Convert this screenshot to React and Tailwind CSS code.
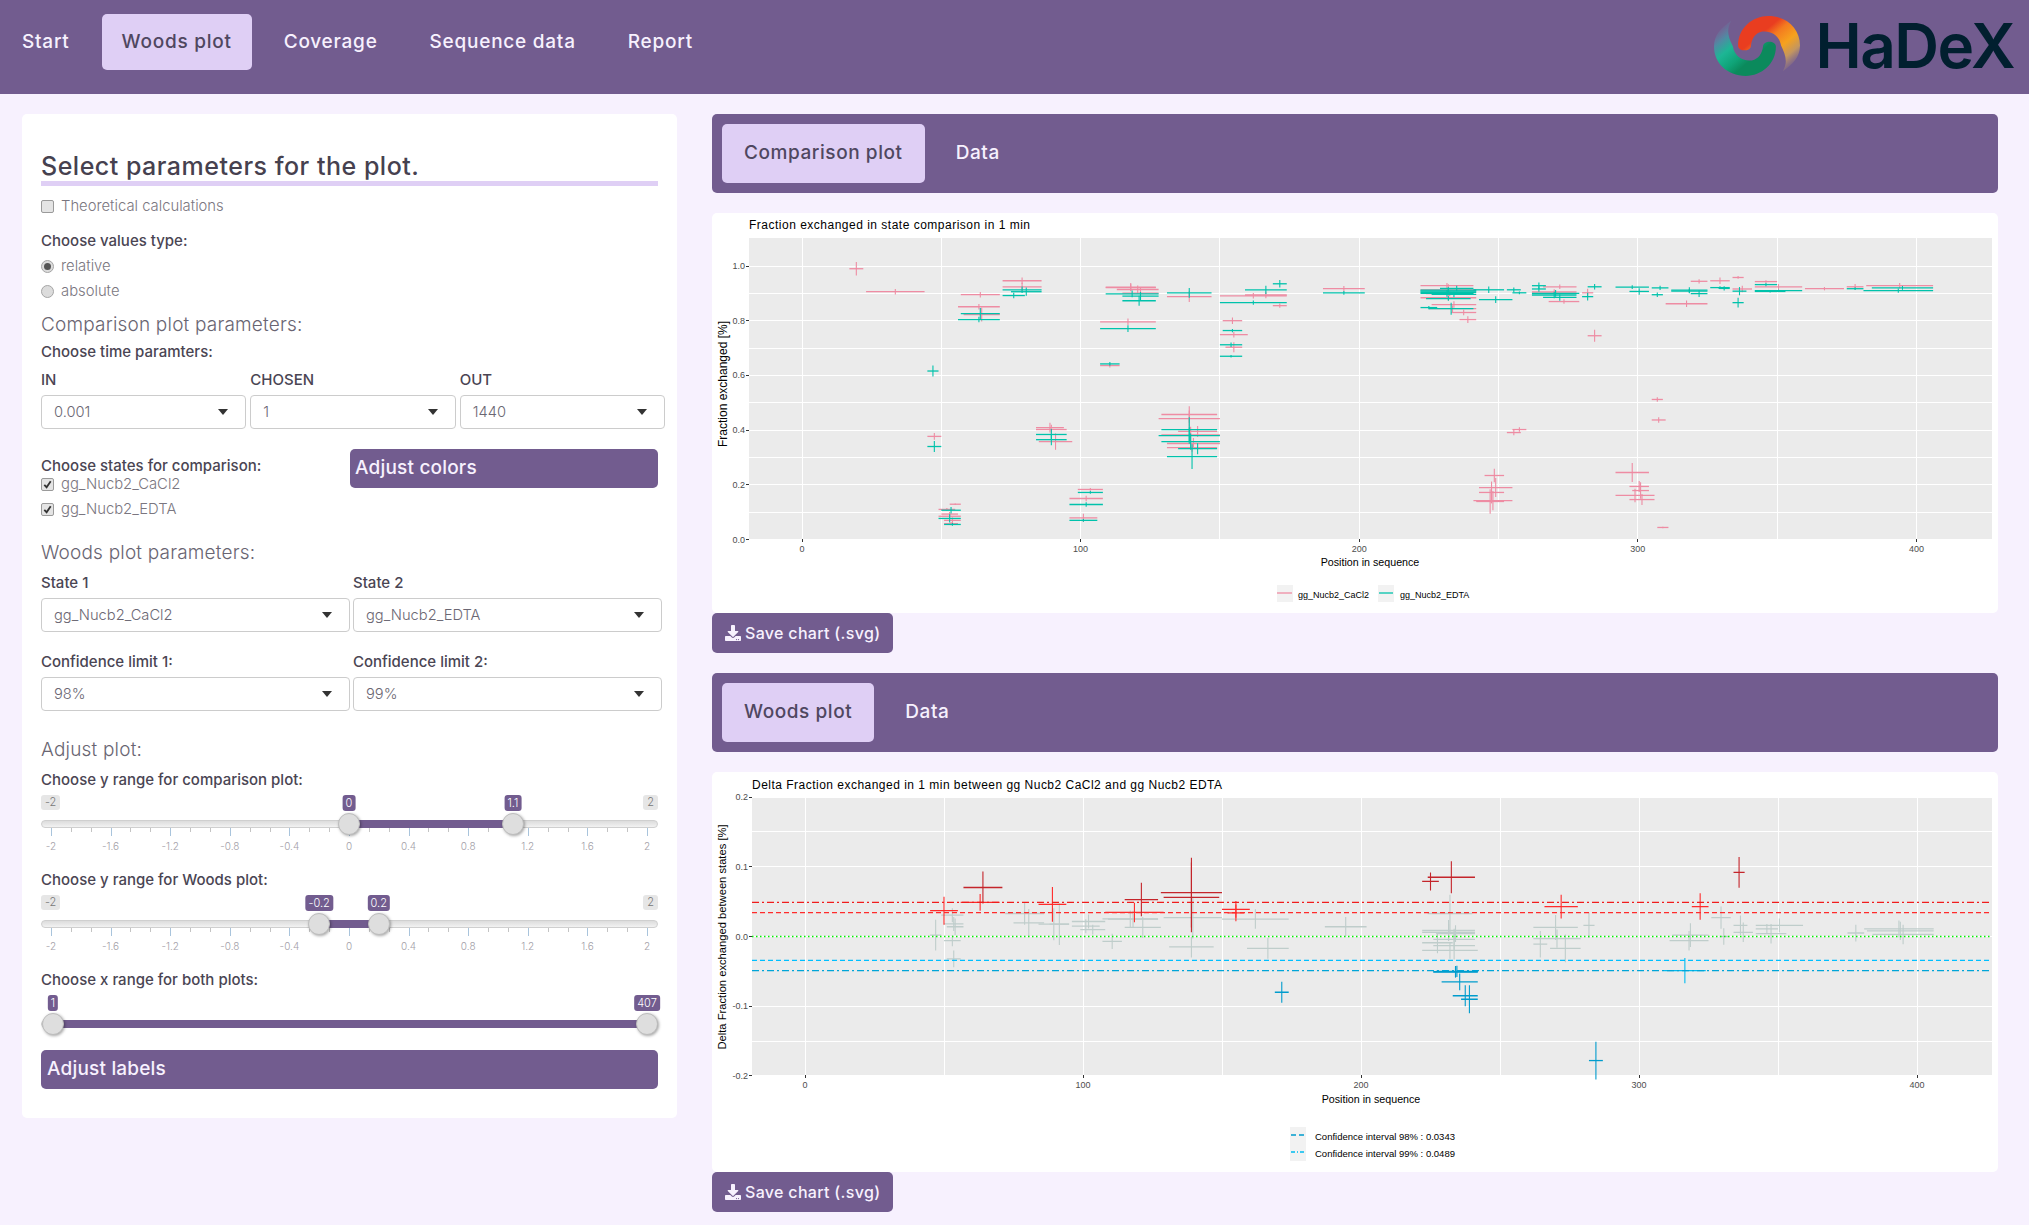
import { FaDownload } from "react-icons/fa";

const PINK = "#ee8ca3";
const TEAL = "#00c2ab";
const DARK = "#c4252b";
const RED = "#ff2b2b";
const BLUE = "#009ccd";
const CYAN = "#00bcf0";
const GRAY = "#bfcdcb";

// [start, end, value, error]
const statePink = [
  [17, 22, 0.99, 0.025], [23, 44, 0.906, 0.01], [57, 71, 0.895, 0.01], [56, 71, 0.851, 0.01], [58, 71, 0.822, 0.025],
  [72, 86, 0.946, 0.012], [72, 86, 0.924, 0.015], [109, 127, 0.923, 0.015], [109, 127, 0.921, 0.012], [113, 128, 0.914, 0.015],
  [115, 128, 0.901, 0.02], [131, 147, 0.888, 0.02], [150, 174, 0.891, 0.01], [159, 174, 0.894, 0.012], [169, 174, 0.855, 0.008],
  [107, 127, 0.796, 0.012], [151, 158, 0.8, 0.012], [150, 160, 0.749, 0.01], [152, 158, 0.703, 0.018], [107, 114, 0.636, 0.007],
  [187, 202, 0.917, 0.01], [45, 50, 0.377, 0.012], [84, 94, 0.409, 0.018], [84, 95, 0.402, 0.018], [85, 97, 0.358, 0.03],
  [129, 149, 0.457, 0.03], [128, 150, 0.442, 0.03], [135, 149, 0.395, 0.02], [129, 150, 0.382, 0.03], [131, 150, 0.351, 0.02],
  [131, 149, 0.336, 0.015], [99, 108, 0.183, 0.005], [96, 108, 0.15, 0.01], [96, 106, 0.079, 0.015], [53, 57, 0.129, 0.003],
  [49, 55, 0.11, 0.005], [50, 56, 0.093, 0.008], [49, 57, 0.085, 0.01], [51, 57, 0.07, 0.01], [51, 56, 0.058, 0.006],
  [222, 241, 0.928, 0.01], [222, 242, 0.913, 0.02], [224, 241, 0.899, 0.01], [222, 242, 0.884, 0.01], [226, 242, 0.859, 0.012],
  [225, 242, 0.844, 0.012], [233, 242, 0.83, 0.01], [236, 242, 0.804, 0.012], [266, 278, 0.924, 0.008], [262, 278, 0.905, 0.01],
  [268, 279, 0.87, 0.008], [280, 284, 0.902, 0.015], [282, 287, 0.745, 0.022], [319, 325, 0.944, 0.008], [326, 333, 0.946, 0.012],
  [334, 338, 0.958, 0.005], [334, 341, 0.916, 0.012], [310, 325, 0.862, 0.012], [342, 350, 0.943, 0.005], [342, 359, 0.924, 0.01],
  [360, 374, 0.917, 0.006], [375, 381, 0.924, 0.01], [382, 406, 0.928, 0.01], [253, 258, 0.391, 0.01], [255, 260, 0.402, 0.008],
  [245, 252, 0.234, 0.025], [243, 255, 0.19, 0.035], [243, 252, 0.172, 0.04], [241, 255, 0.142, 0.035], [242, 252, 0.139, 0.045],
  [292, 304, 0.245, 0.035], [297, 304, 0.194, 0.02], [298, 304, 0.179, 0.03], [292, 306, 0.161, 0.025], [297, 306, 0.146, 0.02],
  [305, 309, 0.512, 0.008], [305, 310, 0.437, 0.01], [307, 311, 0.044, 0.003],
];

const stateTeal = [
  [45, 49, 0.616, 0.02], [45, 50, 0.34, 0.02], [57, 71, 0.826, 0.02], [56, 71, 0.804, 0.01], [72, 80, 0.892, 0.01],
  [75, 86, 0.906, 0.015], [72, 86, 0.913, 0.012], [109, 128, 0.898, 0.012], [115, 128, 0.89, 0.015], [115, 127, 0.873, 0.018],
  [131, 147, 0.902, 0.018], [107, 127, 0.771, 0.012], [159, 174, 0.913, 0.015], [150, 174, 0.866, 0.008], [169, 174, 0.935, 0.014],
  [151, 158, 0.764, 0.006], [150, 158, 0.712, 0.008], [150, 158, 0.67, 0.005], [107, 114, 0.642, 0.007], [187, 202, 0.902, 0.007],
  [84, 95, 0.384, 0.02], [84, 95, 0.365, 0.02], [129, 149, 0.402, 0.045], [128, 150, 0.38, 0.03], [129, 150, 0.358, 0.03],
  [135, 149, 0.332, 0.02], [131, 149, 0.303, 0.045], [99, 108, 0.172, 0.005], [96, 108, 0.128, 0.008], [96, 106, 0.07, 0.005],
  [50, 57, 0.107, 0.012], [49, 57, 0.077, 0.015], [51, 57, 0.055, 0.005],
  [222, 242, 0.912, 0.01], [222, 242, 0.908, 0.012], [222, 242, 0.904, 0.01], [222, 241, 0.9, 0.012], [226, 242, 0.896, 0.01],
  [229, 241, 0.918, 0.01], [224, 240, 0.881, 0.008], [222, 228, 0.848, 0.006], [225, 241, 0.844, 0.022], [241, 252, 0.913, 0.012],
  [243, 255, 0.877, 0.012], [253, 258, 0.913, 0.008], [255, 260, 0.902, 0.005], [262, 267, 0.928, 0.012], [262, 267, 0.916, 0.01],
  [262, 279, 0.9, 0.012], [262, 278, 0.894, 0.012], [266, 278, 0.885, 0.012], [282, 287, 0.924, 0.01], [280, 284, 0.888, 0.014],
  [292, 304, 0.923, 0.007], [297, 304, 0.907, 0.012], [305, 311, 0.92, 0.008], [305, 309, 0.895, 0.008], [312, 325, 0.912, 0.01],
  [312, 325, 0.908, 0.008], [319, 325, 0.899, 0.012], [326, 333, 0.921, 0.005], [329, 333, 0.918, 0.008], [334, 339, 0.908, 0.015],
  [334, 338, 0.866, 0.018], [342, 350, 0.932, 0.006], [342, 353, 0.907, 0.004], [342, 359, 0.91, 0.004], [375, 381, 0.917, 0.005],
  [384, 406, 0.92, 0.007], [381, 406, 0.91, 0.008],
];

const woodsGray = [
  [49, 57, 0.0306, 0.01], [50, 57, 0.018, 0.01], [51, 57, 0.014, 0.012], [45, 49, 0.002, 0.022], [50, 56, -0.006, 0.008],
  [51, 56, -0.032, 0.012], [72, 86, 0.033, 0.016], [75, 86, 0.0196, 0.02], [84, 95, 0.0177, 0.023], [88, 95, 0.0177, 0.03],
  [96, 108, 0.0215, 0.01], [96, 106, 0.0148, 0.01], [99, 108, 0.01, 0.007], [107, 114, -0.007, 0.011], [107, 127, 0.0254, 0.012],
  [109, 127, 0.025, 0.012], [115, 128, 0.013, 0.015], [129, 150, 0.0272, 0.03], [131, 147, -0.015, 0.015], [150, 174, 0.025, 0.014],
  [159, 174, -0.017, 0.015], [187, 202, 0.014, 0.014], [224, 240, 0.033, 0.027], [222, 241, 0.0086, 0.015], [222, 241, 0.0058, 0.012],
  [227, 241, 0.004, 0.012], [222, 233, -0.009, 0.015], [226, 241, -0.004, 0.015], [226, 241, -0.013, 0.02], [222, 242, -0.02, 0.012],
  [262, 278, 0.013, 0.018], [262, 279, -0.003, 0.013], [262, 267, -0.011, 0.019], [268, 279, -0.017, 0.02], [280, 284, 0.016, 0.018],
  [312, 325, 0.002, 0.017], [311, 325, -0.006, 0.014], [326, 333, 0.027, 0.016], [329, 332, 0, 0.012], [334, 339, 0.016, 0.014],
  [334, 341, 0.006, 0.014], [342, 350, 0.011, 0.007], [342, 353, 0.004, 0.014], [342, 359, 0.016, 0.01], [375, 381, 0.005, 0.012],
  [381, 406, 0.011, 0.012], [382, 406, 0.008, 0.013], [384, 406, 0.003, 0.014],
];

const woodsRed = [
  [45, 55, 0.037, 0.02], [56, 70, 0.049, 0.012], [84, 94, 0.046, 0.025], [108, 129, 0.0345, 0.014], [150, 160, 0.039, 0.012],
  [152, 158, 0.034, 0.012], [266, 278, 0.043, 0.017], [319, 325, 0.043, 0.019],
];
const woodsDark = [
  [57, 71, 0.0703, 0.023], [115, 127, 0.053, 0.024], [128, 150, 0.063, 0.05], [129, 149, 0.056, 0.05],
  [222, 228, 0.079, 0.013], [224, 241, 0.085, 0.023], [334, 338, 0.092, 0.022],
];
const woodsBlue = [
  [169, 174, -0.08, 0.015], [226, 242, -0.051, 0.008], [226, 242, -0.0505, 0.008], [227, 242, -0.05, 0.008], [229, 242, -0.065, 0.012],
  [233, 242, -0.085, 0.015], [236, 242, -0.09, 0.02], [282, 287, -0.178, 0.027],
];

function Crosses({ data, color, sx, sy }) {
  return (
    <g stroke={color}>
      {data.map(([a, b, v, e], i) => (
        <g key={i}>
          <line x1={sx(a)} x2={sx(b)} y1={sy(v)} y2={sy(v)} strokeWidth="1.3" />
          <line x1={sx((a + b) / 2)} x2={sx((a + b) / 2)} y1={sy(v + e)} y2={sy(v - e)} strokeWidth="1.1" />
        </g>
      ))}
    </g>
  );
}

function Panel({ box, sx, sy, yTicks, yMinor, digits }) {
  const xTicks = [0, 100, 200, 300, 400];
  return (
    <g>
      <rect x={box.left} y={box.top} width={box.right - box.left} height={box.bottom - box.top} fill="#ebebeb" />
      <g stroke="#fff" shapeRendering="crispEdges">
        {yMinor.map((v) => <line key={v} x1={box.left} x2={box.right} y1={sy(v)} y2={sy(v)} />)}
        {yTicks.map((v) => <line key={v} x1={box.left} x2={box.right} y1={sy(v)} y2={sy(v)} />)}
        {[50, 150, 250, 350].map((v) => <line key={v} x1={sx(v)} x2={sx(v)} y1={box.top} y2={box.bottom} />)}
        {xTicks.map((v) => <line key={v} x1={sx(v)} x2={sx(v)} y1={box.top} y2={box.bottom} />)}
      </g>
      <g stroke="#333" shapeRendering="crispEdges">
        {yTicks.map((v) => <line key={v} x1={box.left - 3} x2={box.left} y1={sy(v)} y2={sy(v)} />)}
        {xTicks.map((v) => <line key={v} x1={sx(v)} x2={sx(v)} y1={box.bottom} y2={box.bottom + 3} />)}
      </g>
      <g fill="#4d4d4d" fontSize="9">
        {yTicks.map((v) => (
          <text key={v} x={box.left - 4} y={sy(v) + 3} textAnchor="end">{v === 0 ? "0.0" : v.toFixed(digits)}</text>
        ))}
        {xTicks.map((v) => (
          <text key={v} x={sx(v)} y={box.bottom + 13} textAnchor="middle">{v}</text>
        ))}
      </g>
    </g>
  );
}

function ComparisonChart() {
  const box = { left: 749, right: 1992, top: 238, bottom: 539 };
  const sx = (v) => 802 + v * 2.786;
  const sy = (v) => 539.5 - v * 273.5;
  return (
    <svg viewBox="712 213 1286 400" className="block w-full h-[400px] rounded-[5px] bg-white" fontFamily="'Liberation Sans', sans-serif">
      <text x="749" y="229" fontSize="12" textLength="281" lengthAdjust="spacing">Fraction exchanged in state comparison in 1 min</text>
      <Panel box={box} sx={sx} sy={sy} yTicks={[0, 0.2, 0.4, 0.6, 0.8, 1]} yMinor={[0.1, 0.3, 0.5, 0.7, 0.9]} digits={1} />
      <Crosses data={statePink} color={PINK} sx={sx} sy={sy} />
      <Crosses data={stateTeal} color={TEAL} sx={sx} sy={sy} />
      <text x="1370" y="566" fontSize="10.7" textAnchor="middle">Position in sequence</text>
      <text transform="rotate(-90 727 384)" x="727" y="384" fontSize="12" textAnchor="middle">Fraction exchanged [%]</text>
      <rect x="1277" y="585" width="16" height="17" fill="#f2f2f2" />
      <line x1="1277" x2="1292" y1="593" y2="593" stroke={PINK} strokeWidth="1.3" />
      <text x="1298" y="598" fontSize="9">gg_Nucb2_CaCl2</text>
      <rect x="1378" y="585" width="16" height="17" fill="#f2f2f2" />
      <line x1="1379" x2="1393" y1="593" y2="593" stroke={TEAL} strokeWidth="1.3" />
      <text x="1400" y="598" fontSize="9">gg_Nucb2_EDTA</text>
    </svg>
  );
}

function WoodsChart() {
  const box = { left: 752, right: 1992, top: 797, bottom: 1075 };
  const sx = (v) => 805 + v * 2.78;
  const sy = (v) => 936.5 - v * 697;
  const limits = [
    [0.0489, "#f01c1c", "7 3 2 3"],
    [0.0343, "#ff2b2b", "5 3"],
    [0, "#00f000", "1.5 2.5"],
    [-0.0343, "#00bfff", "5 3"],
    [-0.0489, "#00a5d8", "7 3 2 3"],
  ];
  return (
    <svg viewBox="712 772 1286 400" className="block w-full h-[400px] rounded-[5px] bg-white" fontFamily="'Liberation Sans', sans-serif">
      <text x="752" y="789" fontSize="12" textLength="470" lengthAdjust="spacing">Delta Fraction exchanged in 1 min between gg Nucb2 CaCl2 and gg Nucb2 EDTA</text>
      <Panel box={box} sx={sx} sy={sy} yTicks={[-0.2, -0.1, 0, 0.1, 0.2]} yMinor={[-0.15, 0.15]} digits={1} />
      <Crosses data={woodsGray} color={GRAY} sx={sx} sy={sy} />
      <Crosses data={woodsRed} color={RED} sx={sx} sy={sy} />
      <Crosses data={woodsDark} color={DARK} sx={sx} sy={sy} />
      <Crosses data={woodsBlue} color={BLUE} sx={sx} sy={sy} />
      <Crosses data={[[309, 324, -0.049, 0.018]]} color={CYAN} sx={sx} sy={sy} />
      {limits.map(([v, color, dash]) => (
        <line key={v} x1={box.left} x2={box.right} y1={sy(v)} y2={sy(v)} stroke={color} strokeWidth="1.4" strokeDasharray={dash} />
      ))}
      <text x="1371" y="1103" fontSize="10.7" textAnchor="middle">Position in sequence</text>
      <text transform="rotate(-90 726 937)" x="726" y="937" fontSize="11.2" textAnchor="middle">Delta Fraction exchanged between states [%]</text>
      <rect x="1290" y="1127" width="16" height="17" fill="#f2f2f2" />
      <line x1="1291" x2="1305" y1="1135" y2="1135" stroke={BLUE} strokeWidth="1.3" strokeDasharray="5 3" />
      <text x="1315" y="1140" fontSize="9.5">Confidence interval 98% : 0.0343</text>
      <rect x="1290" y="1144" width="16" height="17" fill="#f2f2f2" />
      <line x1="1291" x2="1305" y1="1152" y2="1152" stroke={CYAN} strokeWidth="1.3" strokeDasharray="4 2 1 2" />
      <text x="1315" y="1157" fontSize="9.5">Confidence interval 99% : 0.0489</text>
    </svg>
  );
}

function Logo() {
  const swirl = "M28 49 C28 20 45 0 63 0 C85 0 100 22 100 49 C100 68 92 80 80 92 C87 75 82 62 78 49 C76 32 66 24 56 26 C48 28 44 38 43 49 C43 60 28 60 28 49 Z";
  return (
    <div className="flex items-center gap-[16px]">
      <svg viewBox="0 0 100 100" preserveAspectRatio="none" className="h-[60px] w-[86px]">
        <defs>
          <linearGradient id="logoOrange" gradientUnits="userSpaceOnUse" x1="36" y1="52" x2="84" y2="92">
            <stop offset="0" stopColor="#e93d20" />
            <stop offset="0.2" stopColor="#f47a1f" />
            <stop offset="0.5" stopColor="#f6a21e" />
            <stop offset="0.75" stopColor="#c4965f" />
            <stop offset="1" stopColor="#a98a7c" stopOpacity="0.1" />
          </linearGradient>
          <linearGradient id="logoGreen" gradientUnits="userSpaceOnUse" x1="36" y1="52" x2="84" y2="92">
            <stop offset="0" stopColor="#0b8a5c" />
            <stop offset="0.2" stopColor="#0fa377" />
            <stop offset="0.5" stopColor="#1db695" />
            <stop offset="0.75" stopColor="#4f8ba3" />
            <stop offset="1" stopColor="#6a7fa5" stopOpacity="0.1" />
          </linearGradient>
        </defs>
        <path d={swirl} fill="url(#logoOrange)" />
        <path d={swirl} fill="url(#logoGreen)" transform="rotate(180 50 50)" />
      </svg>
      <span className="text-[62px] font-semibold leading-none tracking-[-0.025em] text-[#011f2f]">HaDeX</span>
    </div>
  );
}

function Navbar() {
  const items = ["Start", "Woods plot", "Coverage", "Sequence data", "Report"];
  return (
    <nav className="flex h-[94px] justify-between bg-[#725c8f] pl-[2px] pr-[15px]">
      <div className="flex gap-3 pt-[14px]">
        {items.map((item) => (
          <div
            key={item}
            className={`flex h-[56px] items-center rounded-[5px] px-5 text-[19px] font-medium tracking-[0.04em] ${
              item === "Woods plot" ? "bg-[#dfcff5] text-[#4f4760]" : "text-[#f7f1fe]"
            }`}
          >
            {item}
          </div>
        ))}
      </div>
      <div className="flex items-center pb-[2px]">
        <Logo />
      </div>
    </nav>
  );
}

function Label({ children, className = "" }) {
  return <div className={`h-5 text-[15px] font-medium leading-5 text-[#4a4553] ${className}`}>{children}</div>;
}

function SubHeading({ children, className = "" }) {
  return <div className={`h-7 text-[19px] font-light leading-7 tracking-[0.01em] text-[#696572] ${className}`}>{children}</div>;
}

function Select({ value, className = "" }) {
  return (
    <div className={`flex h-[34px] items-center justify-between rounded-[4px] border border-[#cccccc] bg-white pl-3 pr-[17px] text-[14.7px] font-light text-[#6b6773] ${className}`}>
      <span>{value}</span>
      <span className="h-0 w-0 border-x-[5px] border-t-[6px] border-x-transparent border-t-[#333]" />
    </div>
  );
}

function Check({ label, checked, className = "" }) {
  return (
    <div className={`flex h-5 items-center gap-[7px] text-[14.8px] font-light text-[#7a7680] ${className}`}>
      <span className="flex h-[13px] w-[13px] items-center justify-center rounded-[2px] border border-[#9a9a9a] bg-[#e4e4e4]">
        {checked && (
          <svg viewBox="0 0 12 12" className="h-[11px] w-[11px]">
            <path d="M2.5 6.5 L5 9 L9.5 2.5" fill="none" stroke="#333" strokeWidth="2" />
          </svg>
        )}
      </span>
      {label}
    </div>
  );
}

function Radio({ label, checked, className = "" }) {
  return (
    <div className={`flex h-5 items-center gap-[7px] text-[14.8px] font-light text-[#7a7680] ${className}`}>
      <span className="flex h-[13px] w-[13px] items-center justify-center rounded-full border border-[#a5a5a5] bg-[#dcdcdc]">
        {checked && <span className="h-[7px] w-[7px] rounded-full bg-[#555]" />}
      </span>
      {label}
    </div>
  );
}

function Slider({ min, max, from, to, minLabel, maxLabel, ticks, first = 10, last = 606 }) {
  const pos = (v) => first + ((v - min) / (max - min)) * (last - first);
  const minor = [];
  for (let i = 0; i <= 30; i++) minor.push(i);
  return (
    <div className={`relative w-full ${ticks ? "h-[80px]" : "h-[40px]"}`}>
      {minLabel && <span className="absolute left-0 top-[5px] rounded-[3px] bg-[#e6e6e6] px-[4px] text-[11px] font-light leading-[15px] text-[#777]">{minLabel}</span>}
      {maxLabel && <span className="absolute right-0 top-[5px] rounded-[3px] bg-[#e6e6e6] px-[4px] text-[11px] font-light leading-[15px] text-[#777]">{maxLabel}</span>}
      <div className="absolute inset-x-0 top-[30px] h-2 rounded-full border border-[#cfcfcf] bg-gradient-to-b from-[#dcdcdc] to-[#f2f2f2]" />
      <div className="absolute top-[30px] h-2 bg-[#725c8f]" style={{ left: pos(from), width: pos(to) - pos(from) }} />
      {ticks &&
        minor.map((i) => (
          <span
            key={i}
            className={`absolute top-[38px] w-px ${i % 3 === 0 ? "h-2 bg-[#a9c4dc]" : "h-1 bg-[#c4c4c4]"}`}
            style={{ left: first + (i * (last - first)) / 30 }}
          />
        ))}
      {ticks &&
        [-2, -1.6, -1.2, -0.8, -0.4, 0, 0.4, 0.8, 1.2, 1.6, 2].map((v) => (
          <span
            key={v}
            className="absolute top-[48px] -translate-x-1/2 text-[10px] font-light leading-4 text-[#a3a0a8]"
            style={{ left: pos(v) }}
          >
            {v}
          </span>
        ))}
      {[from, to].map((v) => (
        <div key={v} className="absolute top-[23px] -translate-x-1/2" style={{ left: pos(v) }}>
          <div className="h-[22px] w-[22px] rounded-full border border-[#bdbdbd] bg-[#dedede] shadow-[1px_1px_3px_rgba(0,0,0,0.35)]" />
          <span className="absolute -top-[18px] left-1/2 -translate-x-1/2 rounded-[3px] bg-[#725c8f] px-[3px] text-[11px] font-light leading-[16px] text-white">
            {v}
          </span>
        </div>
      ))}
    </div>
  );
}

function Sidebar() {
  return (
    <aside className="h-[1004px] w-[655px] shrink-0 rounded-[5px] bg-white px-[19px] pt-[37px]">
      <h2 className="h-[35px] border-b-[5px] border-[#dfcff5] text-[25px] font-medium leading-[30px] tracking-[0.02em] text-[#46414f]">
        Select parameters for the plot.
      </h2>
      <Check label="Theoretical calculations" className="mt-[10px]" />
      <Label className="mt-[15px]">Choose values type:</Label>
      <Radio label="relative" checked className="mt-[5px]" />
      <Radio label="absolute" className="mt-[5px]" />
      <SubHeading className="mt-[10px]">Comparison plot parameters:</SubHeading>
      <Label className="mt-[3px]">Choose time paramters:</Label>
      <div className="mt-2 grid w-[624px] grid-cols-3 gap-x-[4px]">
        <Label>IN</Label>
        <Label>CHOSEN</Label>
        <Label>OUT</Label>
        <Select value="0.001" className="mt-[5px]" />
        <Select value="1" className="mt-[5px]" />
        <Select value="1440" className="mt-[5px]" />
      </div>
      <div className="mt-[20px] flex">
        <div className="w-[309px] pt-[7px]">
          <Label>Choose states for comparison:</Label>
          <Check label="gg_Nucb2_CaCl2" checked className="mt-[-2px]" />
          <Check label="gg_Nucb2_EDTA" checked className="mt-[5px]" />
        </div>
        <div className="h-[39px] w-[308px] rounded-[5px] bg-[#725c8f] pl-[5px] text-[19px] font-medium leading-[37px] tracking-[0.01em] text-[#f7f1fe]">
          Adjust colors
        </div>
      </div>
      <SubHeading className="mt-[20px]">Woods plot parameters:</SubHeading>
      <div className="mt-[6px] grid w-[621px] grid-cols-2 gap-x-[3px]">
        <Label>State 1</Label>
        <Label>State 2</Label>
        <Select value="gg_Nucb2_CaCl2" className="mt-[5px]" />
        <Select value="gg_Nucb2_EDTA" className="mt-[5px]" />
        <Label className="mt-[20px]">Confidence limit 1:</Label>
        <Label className="mt-[20px]">Confidence limit 2:</Label>
        <Select value="98%" className="mt-[5px]" />
        <Select value="99%" className="mt-[5px]" />
      </div>
      <SubHeading className="mt-[25px]">Adjust plot:</SubHeading>
      <Label className="mt-[6px]">Choose y range for comparison plot:</Label>
      <Slider min={-2} max={2} from={0} to={1.1} minLabel="-2" maxLabel="2" ticks />
      <Label>Choose y range for Woods plot:</Label>
      <Slider min={-2} max={2} from={-0.2} to={0.2} minLabel="-2" maxLabel="2" ticks />
      <Label>Choose x range for both plots:</Label>
      <Slider min={1} max={407} from={1} to={407} first={12} />
      <div className="mt-[20px] h-[39px] rounded-[5px] bg-[#725c8f] pl-[6px] text-[19px] font-medium leading-[37px] tracking-[0.01em] text-[#f7f1fe]">
        Adjust labels
      </div>
    </aside>
  );
}

function TabBar({ active }) {
  return (
    <div className="flex h-[79px] items-center rounded-[5px] bg-[#725c8f] px-[10px]">
      <div className="flex h-[59px] items-center rounded-[5px] bg-[#dfcff5] px-[22px] text-[19px] font-medium tracking-[0.03em] text-[#4f4760]">
        {active}
      </div>
      <div className="ml-[31px] text-[19px] font-medium tracking-[0.03em] text-[#f7f1fe]">Data</div>
    </div>
  );
}

function SaveButton() {
  return (
    <div className="flex h-[40px] w-[181px] items-center gap-[4px] rounded-[5px] bg-[#725c8f] pl-[13px] text-[16px] font-medium tracking-[0.02em] text-[#f7f1fe]">
      <FaDownload className="h-[16px] w-[16px]" />
      Save chart (.svg)
    </div>
  );
}

export default function App() {
  return (
    <div className="min-h-[1225px] bg-[#f7f1fe] font-['Inter',sans-serif]">
      <Navbar />
      <main className="flex gap-[35px] pl-[22px] pt-[20px]">
        <Sidebar />
        <div className="w-[1286px]">
          <TabBar active="Comparison plot" />
          <div className="mt-[20px]">
            <ComparisonChart />
          </div>
          <SaveButton />
          <div className="mt-[20px]">
            <TabBar active="Woods plot" />
          </div>
          <div className="mt-[20px]">
            <WoodsChart />
          </div>
          <SaveButton />
        </div>
      </main>
    </div>
  );
}
